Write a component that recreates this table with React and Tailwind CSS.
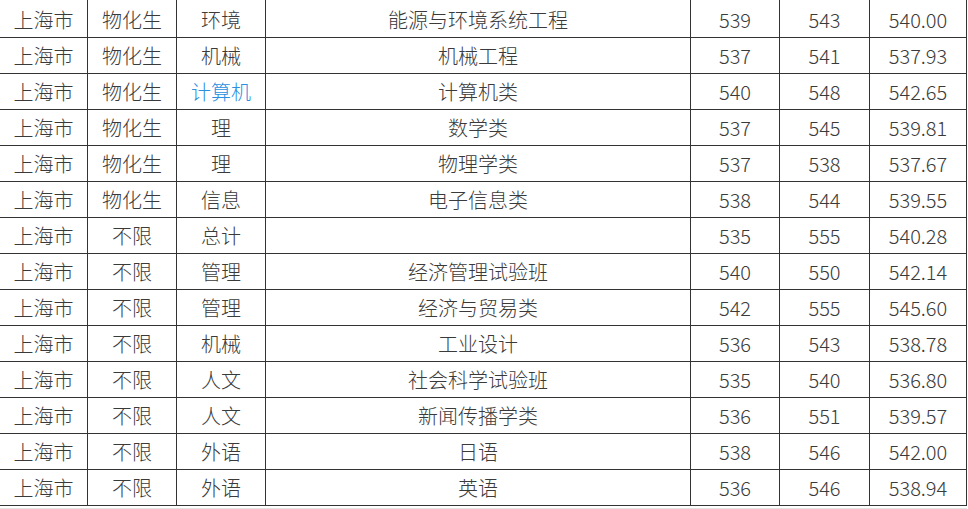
import React from "react";

const ROWS = [
  ["上海市", "物化生", "环境", "能源与环境系统工程", "539", "543", "540.00"],
  ["上海市", "物化生", "机械", "机械工程", "537", "541", "537.93"],
  ["上海市", "物化生", "计算机", "计算机类", "540", "548", "542.65"],
  ["上海市", "物化生", "理", "数学类", "537", "545", "539.81"],
  ["上海市", "物化生", "理", "物理学类", "537", "538", "537.67"],
  ["上海市", "物化生", "信息", "电子信息类", "538", "544", "539.55"],
  ["上海市", "不限", "总计", "", "535", "555", "540.28"],
  ["上海市", "不限", "管理", "经济管理试验班", "540", "550", "542.14"],
  ["上海市", "不限", "管理", "经济与贸易类", "542", "555", "545.60"],
  ["上海市", "不限", "机械", "工业设计", "536", "543", "538.78"],
  ["上海市", "不限", "人文", "社会科学试验班", "535", "540", "536.80"],
  ["上海市", "不限", "人文", "新闻传播学类", "536", "551", "539.57"],
  ["上海市", "不限", "外语", "日语", "538", "546", "542.00"],
  ["上海市", "不限", "外语", "英语", "536", "546", "538.94"],
];

export default function App() {
  return (
    <div
      className="w-[968px] h-[509px] bg-white overflow-hidden text-[20px] text-[#3a3a3a] font-light"
      style={{ fontFamily: '"Noto Sans CJK SC", "Noto Sans", sans-serif' }}
    >
      <div className="grid grid-cols-[88px_89px_89px_425px_89px_90px_97px] border-b border-[#e4e4e4] pb-[2px] w-[967px]">
        {ROWS.map((row, r) =>
          row.map((cell, c) => (
            <div
              key={r + "-" + c}
              className={`flex items-center justify-center border-r border-b border-[#333] leading-none ${r === 0 ? "h-[38px] pt-[2px]" : "h-9"}`}
            >
              {r === 2 && c === 2 ? <span className="text-[#2b8fdf]">{cell}</span> : cell}
            </div>
          ))
        )}
      </div>
    </div>
  );
}
